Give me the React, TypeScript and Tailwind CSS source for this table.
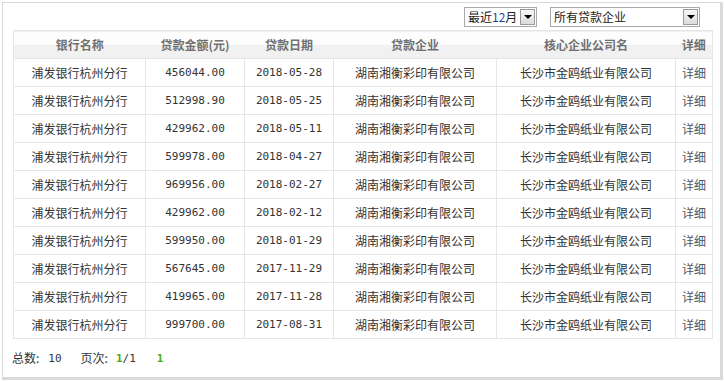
type Loan = {
  bank: string;
  amount: string;
  date: string;
  company: string;
  core: string;
};

const loans: Loan[] = [
  { bank: "浦发银行杭州分行", amount: "456044.00", date: "2018-05-28", company: "湖南湘衡彩印有限公司", core: "长沙市金鸥纸业有限公司" },
  { bank: "浦发银行杭州分行", amount: "512998.90", date: "2018-05-25", company: "湖南湘衡彩印有限公司", core: "长沙市金鸥纸业有限公司" },
  { bank: "浦发银行杭州分行", amount: "429962.00", date: "2018-05-11", company: "湖南湘衡彩印有限公司", core: "长沙市金鸥纸业有限公司" },
  { bank: "浦发银行杭州分行", amount: "599978.00", date: "2018-04-27", company: "湖南湘衡彩印有限公司", core: "长沙市金鸥纸业有限公司" },
  { bank: "浦发银行杭州分行", amount: "969956.00", date: "2018-02-27", company: "湖南湘衡彩印有限公司", core: "长沙市金鸥纸业有限公司" },
  { bank: "浦发银行杭州分行", amount: "429962.00", date: "2018-02-12", company: "湖南湘衡彩印有限公司", core: "长沙市金鸥纸业有限公司" },
  { bank: "浦发银行杭州分行", amount: "599950.00", date: "2018-01-29", company: "湖南湘衡彩印有限公司", core: "长沙市金鸥纸业有限公司" },
  { bank: "浦发银行杭州分行", amount: "567645.00", date: "2017-11-29", company: "湖南湘衡彩印有限公司", core: "长沙市金鸥纸业有限公司" },
  { bank: "浦发银行杭州分行", amount: "419965.00", date: "2017-11-28", company: "湖南湘衡彩印有限公司", core: "长沙市金鸥纸业有限公司" },
  { bank: "浦发银行杭州分行", amount: "999700.00", date: "2017-08-31", company: "湖南湘衡彩印有限公司", core: "长沙市金鸥纸业有限公司" },
];

const cjk = "font-['Noto_Sans_CJK_SC',sans-serif]";
const mono = "font-['DejaVu_Sans_Mono','Noto_Sans_CJK_SC',monospace]";

function Dropdown({ label, width }: { label: React.ReactNode; width: string }) {
  return (
    <div className={`flex h-[20px] items-center justify-between border border-[#a9a9a9] bg-white pl-[3px] pr-[1px] ${width}`}>
      <span className="text-[12px] leading-none text-[#222]">{label}</span>
      <span className="flex h-[16px] w-[15px] items-center justify-center border border-[#9a9a9a] bg-[linear-gradient(#f6f6f6,#dcdcdc)]">
        <span className="h-0 w-0 border-x-[4px] border-t-[4px] border-x-transparent border-t-black" />
      </span>
    </div>
  );
}

export default function App() {
  return (
    <div className={`h-[381px] w-[724px] bg-white pl-[2px] pt-[2px] ${cjk}`}>
      <div className="h-[378px] w-[721px] border border-r-[3px] border-b-[3px] border-[#dadada] bg-white">
        <div className="flex items-center gap-[13px] pt-[4px] pl-[461px]">
          <Dropdown width="w-[73px]" label={<>最近<span className="text-[#2a3f9a]">12</span>月</>} />
          <Dropdown width="w-[150px]" label="所有贷款企业" />
        </div>

        <table className="ml-[10px] mt-[3px] w-[699px] table-fixed border-collapse">
          <colgroup>
            <col className="w-[132px]" />
            <col className="w-[99px]" />
            <col className="w-[89px]" />
            <col className="w-[163px]" />
            <col className="w-[179px]" />
            <col className="w-[37px]" />
          </colgroup>
          <thead>
            <tr className="h-[28px] border border-[#e4e4e4] bg-[linear-gradient(#fdfdfd_50%,#f1f1f1_50%)]">
              {["银行名称", "贷款金额(元)", "贷款日期", "贷款企业", "核心企业公司名", "详细"].map((h) => (
                <th key={h} className="p-0 text-center text-[12px] font-bold text-[#707070]">{h}</th>
              ))}
            </tr>
          </thead>
          <tbody>
            {loans.map((loan, i) => (
              <tr key={i} className="h-[28px]">
                <td className="border border-[#e6e6e6] p-0 text-center text-[12px] text-[#333]">{loan.bank}</td>
                <td className={`border border-[#e6e6e6] p-0 pt-[2px] text-center text-[11px] text-[#333] ${mono}`}>{loan.amount}</td>
                <td className={`border border-[#e6e6e6] p-0 pt-[2px] text-center text-[11px] text-[#333] ${mono}`}>{loan.date}</td>
                <td className="border border-[#e6e6e6] p-0 text-center text-[12px] text-[#333]">{loan.company}</td>
                <td className="border border-[#e6e6e6] p-0 text-center text-[12px] text-[#333]">{loan.core}</td>
                <td className="border border-[#e6e6e6] p-0 text-center text-[12px] text-[#555]">详细</td>
              </tr>
            ))}
          </tbody>
        </table>

        <div className="mt-[10px] flex items-center pl-[9px] text-[12px] text-[#333]">
          <span>总数:</span>
          <span className={`ml-[9px] pt-[2px] text-[11px] ${mono}`}>10</span>
          <span className="ml-[19px]">页次:</span>
          <span className={`ml-[8px] pt-[2px] text-[11px] ${mono}`}>
            <span className="font-bold text-[#4cae00]">1</span>/1
          </span>
          <span className={`ml-[21px] pt-[2px] text-[11px] font-bold text-[#4cae00] ${mono}`}>1</span>
        </div>
      </div>
    </div>
  );
}
